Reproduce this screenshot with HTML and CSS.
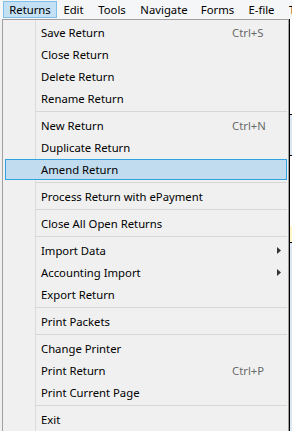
FILE: index.html
```html
<!DOCTYPE html>
<html>
<head>
<meta charset="utf-8">
<link rel="stylesheet" href="styles.css">
</head>
<body>
<div class="menubar">
  <div class="mb-item active w1">Returns</div>
  <div class="mb-item w2">Edit</div>
  <div class="mb-item w3">Tools</div>
  <div class="mb-item w4">Navigate</div>
  <div class="mb-item w5">Forms</div>
  <div class="mb-item w6">E-file</div>
  <div class="mb-item w7">T</div>
</div>
<div class="main">
  <div class="menu">
    <div class="item"><span>Save Return</span><span class="key">Ctrl+S</span></div>
    <div class="item"><span>Close Return</span></div>
    <div class="item"><span>Delete Return</span></div>
    <div class="item"><span>Rename Return</span></div>
    <div class="sep"></div>
    <div class="item"><span>New Return</span><span class="key">Ctrl+N</span></div>
    <div class="item"><span>Duplicate Return</span></div>
    <div class="item hover"><span>Amend Return</span></div>
    <div class="sep"></div>
    <div class="item"><span>Process Return with ePayment</span></div>
    <div class="sep"></div>
    <div class="item"><span>Close All Open Returns</span></div>
    <div class="sep"></div>
    <div class="item"><span>Import Data</span><span></span><svg class="arrow" width="4" height="7" viewBox="0 0 4 7"><polygon points="0,0 4,3.5 0,7" fill="#333"/></svg></div>
    <div class="item"><span>Accounting Import</span><span></span><svg class="arrow" width="4" height="7" viewBox="0 0 4 7"><polygon points="0,0 4,3.5 0,7" fill="#333"/></svg></div>
    <div class="item"><span>Export Return</span></div>
    <div class="sep"></div>
    <div class="item"><span>Print Packets</span></div>
    <div class="sep"></div>
    <div class="item"><span>Change Printer</span></div>
    <div class="item"><span>Print Return</span><span class="key">Ctrl+P</span></div>
    <div class="item"><span>Print Current Page</span></div>
    <div class="sep"></div>
    <div class="item"><span>Exit</span></div>
  </div>
  <div class="strip">
    <div class="s-a"></div>
    <div class="s-b"></div>
    <div class="s-c"></div>
    <div class="s-d"></div>
    <div class="s-e"></div>
  </div>
</div>
</body>
</html>
```
FILE: styles.css
```css
html, body {
  margin: 0;
  padding: 0;
  width: 292px;
  height: 431px;
  overflow: hidden;
  background: #f0f0f0;
  font-family: "Noto Sans", "Open Sans", sans-serif;
  font-size: 11.3px;
  color: #000;
}

.menubar {
  height: 19px;
  display: flex;
  padding-left: 3px;
  background: #f5f6f7;
  white-space: nowrap;
  overflow: hidden;
}

.mb-item {
  box-sizing: border-box;
  height: 17px;
  margin-top: 1px;
  border: 1px solid transparent;
  text-align: center;
  line-height: 15px;
  flex: none;
}

.mb-item.active {
  background: #c4e0f4;
  border-color: #7fbfe8;
}

.w1 { width: 54px; }
.w2 { width: 33px; }
.w3 { width: 44px; }
.w4 { width: 60px; }
.w5 { width: 47px; }
.w6 { width: 41px; }
.w7 { width: 10px; text-align: left; padding-left: 6px; }

.main {
  display: flex;
  padding-left: 2px;
}

.menu {
  box-sizing: border-box;
  width: 287px;
  height: 420px;
  flex: none;
  border: 1px solid #a0a0a0;
  border-bottom: none;
  padding-top: 2px;
  background: linear-gradient(to right, transparent 32px, #dcdcdc 32px, #dcdcdc 33px, transparent 33px), #f0f0f0;
  display: flex;
  flex-direction: column;
}

.item {
  box-sizing: border-box;
  height: 21px;
  margin: 0 1px 1px 2px;
  border: 1px solid transparent;
  padding: 0 5px 0 35px;
  display: grid;
  grid-template-columns: 191px 1fr auto;
  align-items: center;
  white-space: nowrap;
  line-height: 19px;
}

.item.hover {
  background: #c1dcef;
  border-color: #30a2e2;
}

.key {
  color: #6a6a6a;
}

.arrow {
  display: block;
}

.sep {
  height: 1px;
  margin: 1px 1px 3px 33px;
  background: #d7d7d7;
  flex: none;
}

.strip {
  flex: 1;
  height: 420px;
  background: #ffffff;
  display: flex;
  flex-direction: column;
  border-left: 1px solid #000;
}

.s-a { height: 95px; background: #ffffff; }
.s-b { height: 40px; background: #dbe8f4; border-top: 1px solid #000; }
.s-c { height: 70px; background: #ffffff; border-top: 1px solid #000; }
.s-d { height: 16px; background: #fff6c8; }
.s-e { flex: 1; background: #dbe8f4; border-top: 1px solid #000; }
```
